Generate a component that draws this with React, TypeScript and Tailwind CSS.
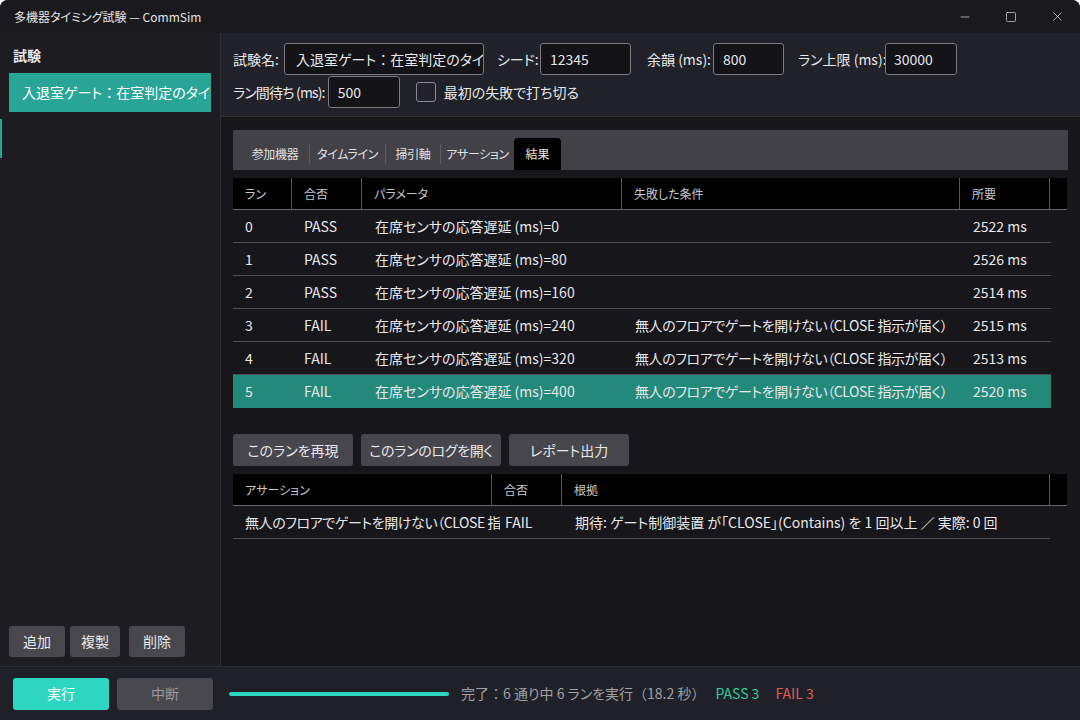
import { Minus, Square, X } from 'lucide-react'

const runs = [
  { id: 0, res: 'PASS', param: '在席センサの応答遅延 (ms)=0', fail: '', time: '2522 ms' },
  { id: 1, res: 'PASS', param: '在席センサの応答遅延 (ms)=80', fail: '', time: '2526 ms' },
  { id: 2, res: 'PASS', param: '在席センサの応答遅延 (ms)=160', fail: '', time: '2514 ms' },
  { id: 3, res: 'FAIL', param: '在席センサの応答遅延 (ms)=240', fail: '無人のフロアでゲートを開けない（CLOSE 指示が届く）', time: '2515 ms' },
  { id: 4, res: 'FAIL', param: '在席センサの応答遅延 (ms)=320', fail: '無人のフロアでゲートを開けない（CLOSE 指示が届く）', time: '2513 ms' },
  { id: 5, res: 'FAIL', param: '在席センサの応答遅延 (ms)=400', fail: '無人のフロアでゲートを開けない（CLOSE 指示が届く）', time: '2520 ms' },
]

const tabs = [
  { label: '参加機器', w: 'w-[68px]' },
  { label: 'タイムライン', w: 'w-[76px]' },
  { label: '掃引軸', w: 'w-[55px]' },
  { label: 'アサーション', w: 'w-[74px]' },
]

// full-width punctuation kept at full width (palt narrows it)
function Fw({ c }: { c: string }) {
  return <span className="[font-feature-settings:normal]">{c}</span>
}

export default function App() {
  return (
    <div className="w-[1080px] h-[720px] flex flex-col overflow-hidden bg-[#1c1c21] text-[#e8e8ea] font-['Noto_Sans_CJK_JP',sans-serif] text-[14px] [font-feature-settings:'palt'] rounded-t-[8px]">
      {/* Title bar */}
      <div className="h-[33px] flex items-center bg-[#1a1a1e] shrink-0">
        <span className="pl-[14px] text-[12px] text-[#e4e4e6]">多機器タイミング試験 — CommSim</span>
        <div className="ml-auto flex items-center h-full">
          <div className="w-[46px] flex justify-center"><Minus size={14} strokeWidth={1.2} /></div>
          <div className="w-[46px] flex justify-center"><Square size={12} strokeWidth={1.3} /></div>
          <div className="w-[46px] flex justify-center"><X size={15} strokeWidth={1.1} /></div>
        </div>
      </div>

      <div className="flex flex-1 min-h-0">
        {/* Sidebar */}
        <aside className="w-[221px] shrink-0 flex flex-col bg-[#1c1c21] border-r border-[#2c2d33] relative">
          <div className="absolute left-0 top-[86px] w-[2px] h-[39px] bg-[#26a69a]" />
          <div className="px-[13px] pt-[12px] pb-[7px] font-bold text-[14px]">試験</div>
          <div className="mx-[9px] h-[39px] bg-[#29a597] flex items-center px-[13px] text-[14px] text-white whitespace-nowrap overflow-hidden">
            入退室ゲート<Fw c="：" />在室判定のタイミング試験
          </div>
          <div className="mt-auto flex gap-[5px] px-[9px] pb-[9px]">
            <button className="w-[56px] h-[31px] bg-[#47474d] rounded-[3px] text-[14px]">追加</button>
            <button className="w-[50px] h-[31px] bg-[#47474d] rounded-[3px] text-[14px]">複製</button>
            <button className="w-[56px] h-[31px] bg-[#47474d] rounded-[3px] text-[14px] ml-[4px]">削除</button>
          </div>
        </aside>

        {/* Main */}
        <main className="flex-1 flex flex-col min-w-0 bg-[#16161b]">
          {/* Form */}
          <div className="h-[84px] shrink-0 bg-[#202129] border-b border-[#2f3037] px-[12px] pt-[10px] flex flex-col gap-[1px]">
            <div className="flex items-center h-[32px]">
              <span className="w-[51px]">試験名:</span>
              <div className="w-[200px] h-[32px] border border-[#7a7a80] rounded-[3px] bg-[#131318] flex items-center px-[11px] whitespace-nowrap overflow-hidden">入退室ゲート<Fw c="：" />在室判定のタイミング試験</div>
              <span className="ml-[13px] w-[43px]">シード:</span>
              <div className="w-[91px] h-[32px] border border-[#7a7a80] rounded-[3px] bg-[#131318] flex items-center px-[9px]">12345</div>
              <span className="ml-[16px] w-[66px]">余韻 (ms):</span>
              <div className="w-[71px] h-[32px] border border-[#7a7a80] rounded-[3px] bg-[#131318] flex items-center px-[9px]">800</div>
              <span className="ml-[14px] w-[87px] whitespace-nowrap">ラン上限 (ms):</span>
              <div className="w-[72px] h-[32px] border border-[#7a7a80] rounded-[3px] bg-[#131318] flex items-center px-[8px]">30000</div>
            </div>
            <div className="flex items-center h-[32px]">
              <span className="mr-[3px] whitespace-nowrap tracking-[-0.06em]">ラン間待ち (ms):</span>
              <div className="w-[72px] h-[32px] border border-[#7a7a80] rounded-[3px] bg-[#131318] flex items-center px-[9px]">500</div>
              <div className="ml-[16px] w-[20px] h-[20px] border border-[#8a8a90] rounded-[3px]" />
              <span className="ml-[8px]">最初の失敗で打ち切る</span>
            </div>
          </div>

          {/* Content */}
          <div className="flex-1 flex flex-col px-[12px] pt-[13px]">
            {/* Tabs */}
            <div className="h-[40px] bg-[#414147] flex items-end pl-[8px]">
              {tabs.map((t, i) => (
                <div key={t.label} className={`h-[32px] flex items-center ${t.w}`}>
                  {i > 0 && <span className="w-px h-[20px] bg-[#5c5c62]" />}
                  <span className="flex-1 text-center text-[12px] text-[#e2e2e4] tracking-[-0.03em] whitespace-nowrap">{t.label}</span>
                </div>
              ))}
              <div className="h-[32px] w-[47px] justify-center flex items-center bg-black rounded-t-[4px] text-[12px]">結果</div>
            </div>

            {/* Results table */}
            <div className="mt-[8px] w-[834px]">
              <div className="h-[32px] bg-black grid grid-cols-[59px_70px_260px_338px_90px_17px] text-[12px] text-[#c8c8cc] border-b border-[#6a6a70]">
                {['ラン', '合否', 'パラメータ', '失敗した条件', '所要', ''].map((h, i) => (
                  <div key={i} className={`flex items-center pl-[12px] ${i < 5 ? 'border-r border-[#55555b]' : ''}`}>{h}</div>
                ))}
              </div>
              {runs.map((r) => (
                <div
                  key={r.id}
                  className={`w-[818px] h-[33px] grid grid-cols-[59px_70px_260px_338px_91px] items-center ${r.id === 5 ? 'bg-[#22897b]' : 'border-b border-[#4f4f55]'}`}
                >
                  <span className="pl-[12px]">{r.id}</span>
                  <span className="pl-[12px]">{r.res}</span>
                  <span className="pl-[13px] whitespace-nowrap">{r.param}</span>
                  <span className="pl-[13px] whitespace-nowrap overflow-hidden tracking-[-0.03em]">{r.fail}</span>
                  <span className="pl-[13px] whitespace-nowrap">{r.time}</span>
                </div>
              ))}
            </div>

            {/* Actions */}
            <div className="mt-[26px] flex gap-[8px]">
              <button className="w-[120px] h-[32px] bg-[#46464c] rounded-[3px] text-[14px]">このランを再現</button>
              <button className="w-[140px] h-[32px] bg-[#46464c] rounded-[3px] text-[14px] tracking-[-0.02em]">このランのログを開く</button>
              <button className="w-[120px] h-[32px] bg-[#46464c] rounded-[3px] text-[14px]">レポート出力</button>
            </div>

            {/* Assertion table */}
            <div className="mt-[8px] w-[834px]">
              <div className="h-[32px] bg-black grid grid-cols-[259px_70px_488px_17px] text-[12px] text-[#c8c8cc] border-b border-[#6a6a70]">
                {['アサーション', '合否', '根拠', ''].map((h, i) => (
                  <div key={i} className={`flex items-center pl-[12px] ${i < 3 ? 'border-r border-[#55555b]' : ''}`}>{h}</div>
                ))}
              </div>
              <div className="w-[817px] h-[33px] grid grid-cols-[267px_62px_488px] items-center border-b border-[#4f4f55]">
                <span className="pl-[12px] whitespace-nowrap overflow-hidden tracking-[-0.03em]">無人のフロアでゲートを開けない（CLOSE 指示が届く）</span>
                <span className="pl-[5px]">FAIL</span>
                <span className="pl-[13px] whitespace-nowrap">期待: ゲート制御装置 が「CLOSE」(Contains) を 1 回以上 ／ 実際: 0 回</span>
              </div>
            </div>
          </div>
        </main>
      </div>

      {/* Bottom bar */}
      <div className="h-[54px] shrink-0 bg-[#1f2028] border-t border-[#2c2d33] flex items-center px-[13px]">
        <button className="w-[96px] h-[32px] bg-[#2dd6c1] rounded-[3px] text-white text-[14px]">実行</button>
        <button className="ml-[8px] w-[96px] h-[32px] bg-[#48484e] rounded-[3px] text-[#9a9aa0] text-[14px]">中断</button>
        <div className="ml-[16px] w-[220px] h-[4px] rounded-full bg-[#2dd6c1]" />
        <span className="ml-[12px] text-[#a0a0a6] whitespace-nowrap">
          完了<Fw c="：" />6 通り中 6 ランを実行<Fw c="（" />18.2 秒<Fw c="）" />
        </span>
        <span className="ml-[10px] text-[#36c99a]">PASS 3</span>
        <span className="ml-[16px] text-[#e05c5c]">FAIL 3</span>
      </div>
    </div>
  )
}
